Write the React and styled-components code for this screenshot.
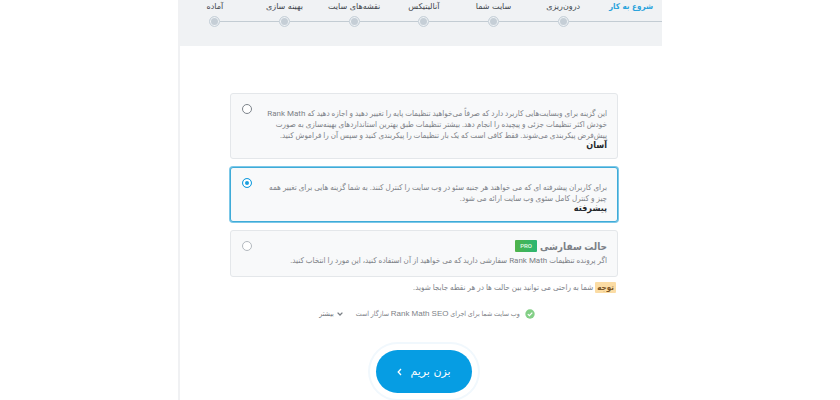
import React, { useState } from "react";
import styled, { createGlobalStyle } from "styled-components";

const GlobalStyle = createGlobalStyle`
  * {
    box-sizing: border-box;
  }
  body {
    margin: 0;
    background-color: #ffffff;
    font-family: Roboto, "DejaVu Sans Condensed", "DejaVu Sans", sans-serif;
    font-size: 8px;
    color: #7d8187;
  }
`;

const PageWrapper = styled.div`
  display: flex;
  width: 100%;
  min-height: 100vh;
  padding: 0 16px;
`;

const WizardContainer = styled.main`
  width: 100%;
  max-width: 484px;
  margin: 0 auto;
  border-left: 2px solid #f0f1f3;
`;

const StepsHeader = styled.ol`
  display: flex;
  margin: 0;
  padding: 0 0 19px;
  list-style: none;
  background-color: #f0f2f4;
`;

const Step = styled.li`
  display: flex;
  flex-direction: column;
  flex: ${({ $current }) => ($current ? "0 0 64px" : "1 1 0")};
  min-width: 0;
`;

const StepLabel = styled.span`
  height: 15px;
  padding-right: ${({ $current }) => ($current ? "9px" : "0")};
  line-height: 13px;
  font-family: ${({ $current }) =>
    $current ? '"DejaVu Sans Condensed", sans-serif' : '"DejaVu Sans", sans-serif'};
  font-weight: ${({ $current }) => ($current ? "700" : "400")};
  text-align: ${({ $current }) => ($current ? "right" : "center")};
  white-space: nowrap;
  color: ${({ $current }) => ($current ? "#2ba3dc" : "#41464c")};
`;

const StepTrack = styled.span`
  display: flex;
  align-items: center;
  height: 12px;
`;

const StepLine = styled.span`
  flex: 1;
  height: 1px;
  background-color: ${({ $hidden }) => ($hidden ? "transparent" : "#c3ccd3")};
`;

const StepDot = styled.span`
  width: 11px;
  height: 11px;
  border: 1px solid #c9d3db;
  border-radius: 50%;
  background-color: #c5ced6;
  box-shadow: inset 0 0 0 1px #f0f4f7;
`;

const Content = styled.form`
  display: flex;
  flex-direction: column;
  padding: 47px 44px 0 50px;
`;

const ModeCard = styled.label`
  display: flex;
  align-items: flex-start;
  justify-content: space-between;
  margin-bottom: 8px;
  padding: ${({ $compact }) => ($compact ? "9px 10px 10px 11px" : "14px 10px 8px 11px")};
  border: 1px solid ${({ $selected }) => ($selected ? "#3fabd8" : "#e4e7ea")};
  border-radius: 3px;
  background-color: #f8f9fa;
  box-shadow: ${({ $selected }) => ($selected ? "0 0 0 1px #7cc8e8" : "none")};
`;

const ModeBody = styled.span`
  display: flex;
  flex-direction: column;
`;

const ModeText = styled.span`
  line-height: 11px;
  white-space: pre-line;
`;

const ModeTitle = styled.strong`
  line-height: 9px;
  font-size: 9px;
  color: #25282c;
`;

const CustomTitle = styled.strong`
  display: flex;
  align-items: center;
  gap: 3px;
  height: 12px;
  margin-bottom: 3px;
  font-size: 10px;
  color: #7b8086;
`;

const ProBadge = styled.span`
  padding: 0 5px;
  border-radius: 1px;
  line-height: 12px;
  font-size: 6px;
  font-weight: 500;
  color: #e6fbea;
  background: linear-gradient(90deg, #50b34a, #2bb673);
`;

const RadioInput = styled.input`
  appearance: none;
  flex: none;
  width: 10px;
  height: 10px;
  margin: ${({ $compact }) => ($compact ? "1px 0 0" : "-4px 0 0")};
  border: 1px solid #7d848b;
  border-radius: 50%;
  background-color: #ffffff;
  &:checked {
    border-color: #1b9fdf;
    background-color: #1b9fdf;
    box-shadow: inset 0 0 0 2px #ffffff;
  }
  &:disabled {
    border-color: #b3b9bf;
  }
`;

const Note = styled.p`
  display: flex;
  align-items: center;
  gap: 2px;
  margin: -3px 2px 0;
  line-height: 11px;
`;

const NoteMark = styled.mark`
  padding: 0 2px;
  border-radius: 1px;
  font-weight: 700;
  color: #7a5426;
  background-color: #fbdca4;
`;

const StatusRow = styled.div`
  display: flex;
  align-items: center;
  justify-content: center;
  gap: 5px;
  margin-top: 15px;
  padding-left: 6px;
  line-height: 12px;
  font-size: 7px;
`;

const ProductName = styled.span`
  font-family: "Liberation Sans", sans-serif;
  font-size: 8px;
`;

const MoreButton = styled.button`
  display: flex;
  align-items: center;
  gap: 3px;
  margin-right: 8px;
  padding: 0;
  border: none;
  background: none;
  font: inherit;
  color: #6c7177;
`;

const StartButton = styled.button`
  display: flex;
  align-items: center;
  justify-content: center;
  align-self: center;
  gap: 8px;
  height: 43px;
  margin: 30px 0 0;
  padding: 0 21px;
  border: none;
  border-radius: 22px;
  box-shadow: 0 0 0 6px #ffffff, 0 0 0 8px #f1f8fd;
  font-family: "DejaVu Sans", sans-serif;
  font-size: 11px;
  color: #ffffff;
  background-color: #069de3;
`;

const CheckIcon = () => (
  <svg width="10" height="10" viewBox="0 0 10 10" aria-hidden="true">
    <circle cx="5" cy="5" r="4.7" fill="#83cf86" />
    <path d="M2.8 5.1l1.6 1.6 2.9-3.1" fill="none" stroke="#fff" strokeWidth="1.2" />
  </svg>
);

const ChevronDown = () => (
  <svg width="6" height="6" viewBox="0 0 6 6" aria-hidden="true">
    <path d="M.6 1.6L3 4l2.4-2.4" fill="none" stroke="#7a7f85" strokeWidth="1.3" />
  </svg>
);

const ChevronLeft = () => (
  <svg width="5" height="8" viewBox="0 0 5 8" aria-hidden="true">
    <path d="M4 1L1.2 4 4 7" fill="none" stroke="#fff" strokeWidth="1.3" />
  </svg>
);

const steps = [
  "شروع به کار",
  "درون‌ریزی",
  "سایت شما",
  "آنالیتیکس",
  "نقشه‌های سایت",
  "بهینه سازی",
  "آماده",
];

const modes = [
  {
    id: "easy",
    title: "آسان",
    text: `این گزینه برای وبسایت‌هایی کاربرد دارد که صرفاً می‌خواهید تنظیمات پایه را تغییر دهید و اجازه دهید که Rank Math
خودش اکثر تنظیمات جزئی و پیچیده را انجام دهد. بیشتر تنظیمات طبق بهترین استانداردهای بهینه‌سازی به صورت
پیش‌فرض پیکربندی می‌شوند. فقط کافی است که یک بار تنظیمات را پیکربندی کنید و سپس آن را فراموش کنید.`,
  },
  {
    id: "advanced",
    title: "پیشرفته",
    text: `برای کاربران پیشرفته ای که می خواهند هر جنبه سئو در وب سایت را کنترل کنند. به شما گزینه هایی برای تغییر همه
چیز و کنترل کامل سئوی وب سایت ارائه می شود.`,
  },
];

const App = () => {
  const [mode, setMode] = useState("advanced");
  return (
    <PageWrapper>
      <GlobalStyle />
      <WizardContainer dir="rtl" lang="fa">
        <StepsHeader>
          {steps.map((step, index) => (
            <Step key={step} $current={index === 0}>
              <StepLabel $current={index === 0}>{step}</StepLabel>
              <StepTrack>
                <StepLine />
                {index > 0 && <StepDot />}
                <StepLine $hidden={index === steps.length - 1} />
              </StepTrack>
            </Step>
          ))}
        </StepsHeader>
        <Content>
          {modes.map(({ id, title, text }) => (
            <ModeCard key={id} $selected={mode === id}>
              <ModeBody>
                <ModeText>{text}</ModeText>
                <ModeTitle>{title}</ModeTitle>
              </ModeBody>
              <RadioInput
                type="radio"
                name="mode"
                value={id}
                checked={mode === id}
                onChange={() => setMode(id)}
              />
            </ModeCard>
          ))}
          <ModeCard $compact>
            <ModeBody>
              <CustomTitle>
                حالت سفارشی <ProBadge>PRO</ProBadge>
              </CustomTitle>
              <ModeText>
                اگر پرونده تنظیمات Rank Math سفارشی دارید که می خواهید از آن استفاده کنید، این مورد را انتخاب کنید.
              </ModeText>
            </ModeBody>
            <RadioInput $compact type="radio" name="mode" value="custom" disabled />
          </ModeCard>
          <Note>
            <NoteMark>توجه</NoteMark>
            شما به راحتی می توانید بین حالت ها در هر نقطه جابجا شوید.
          </Note>
          <StatusRow>
            <CheckIcon />
            <span>
              وب سایت شما برای اجرای <ProductName>Rank Math SEO</ProductName> سازگار است
            </span>
            <MoreButton type="button">
              <ChevronDown />
              بیشتر
            </MoreButton>
          </StatusRow>
          <StartButton type="button">
            بزن بریم <ChevronLeft />
          </StartButton>
        </Content>
      </WizardContainer>
    </PageWrapper>
  );
};

export default App;
